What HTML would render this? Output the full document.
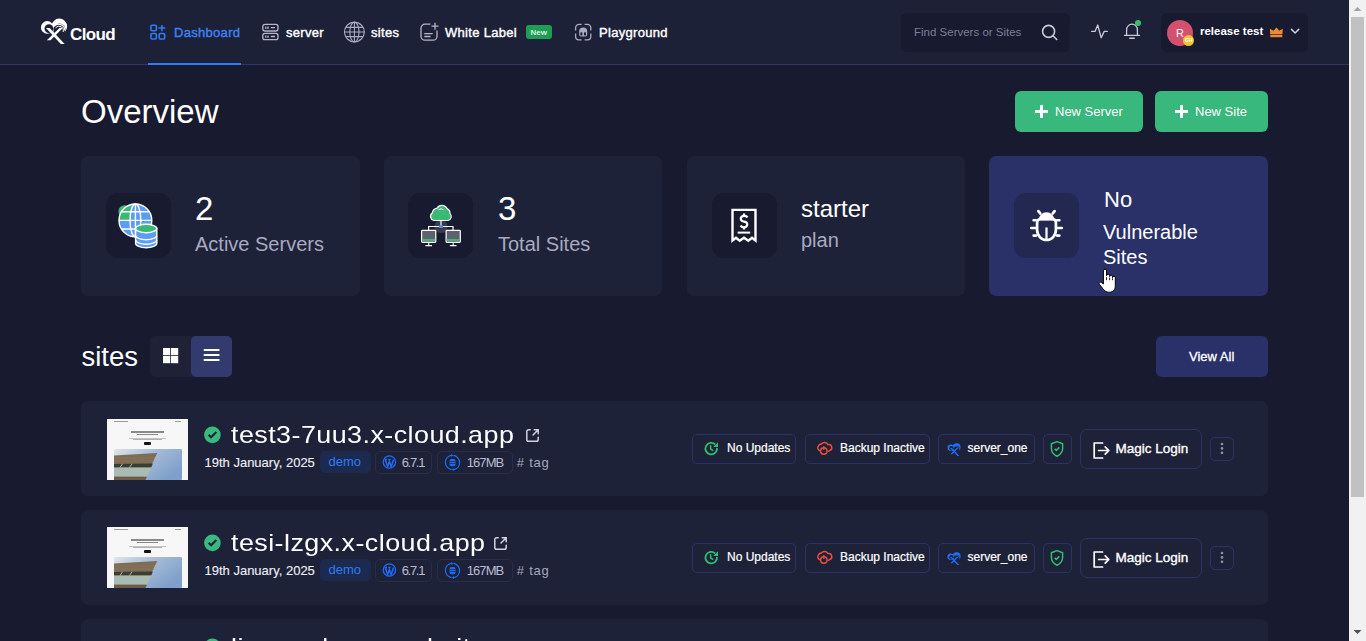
<!DOCTYPE html>
<html><head><meta charset="utf-8">
<style>
*{margin:0;padding:0;box-sizing:border-box}
html,body{width:1366px;height:641px;overflow:hidden;background:#181a2f;font-family:"Liberation Sans",sans-serif;color:#fff}
.a{position:absolute}
.t{position:absolute;white-space:nowrap;line-height:1}
svg{position:absolute;overflow:visible}
#hdr{position:absolute;left:0;top:0;width:1349px;height:65px;background:#1d2137;border-bottom:1px solid #2f3566}
.nav{font-size:13px;font-weight:normal;-webkit-text-stroke:0.4px currentColor;letter-spacing:0.3px;color:#fff}
.card{position:absolute;top:156px;width:279px;height:140px;background:#1e2238;border-radius:7px}
.ibox{position:absolute;left:25px;top:37px;width:65px;height:65px;background:#181a2f;border-radius:12px}
.row{position:absolute;left:81px;width:1187px;height:95px;background:#1e2238;border-radius:7px}
.pill{position:absolute;height:30px;border:1px solid #2d3266;border-radius:5px}
.ptxt{font-size:12px;color:#fff;-webkit-text-stroke:0.2px #fff}
#sb{position:absolute;left:1349px;top:0;width:17px;height:641px;background:#f1f1f1}
</style></head><body>

<div id="hdr"></div>
<!-- logo -->
<svg style="left:38px;top:14px" width="32" height="34" viewBox="0 0 32 34">
<defs><mask id="lm"><rect x="0" y="0" width="32" height="34" fill="#fff"/>
<circle cx="10.9" cy="14.6" r="4.4" fill="#000"/><circle cx="21.4" cy="15.4" r="6" fill="#000"/></mask></defs>
<g mask="url(#lm)" fill="#fff"><circle cx="9.2" cy="13.4" r="6.3"/><circle cx="21.3" cy="12.4" r="7.8"/></g>
<path d="M16.2 12.4 A6 6 0 0 1 26.8 16.4" stroke="#fff" stroke-width="1.2" fill="none"/>
<path d="M17.6 13.8 A4.4 4.4 0 0 1 25.2 18" stroke="#fff" stroke-width="1" fill="none"/>
<path d="M8 13.9 H11.6 L26.6 30 H22.8 Z" fill="#fff"/>
<path d="M21.8 13.7 H25 L12.6 26.3 H8.8 Z" fill="#fff"/>
</svg>
<div class="t" style="left:70px;top:25.5px;font-size:17px;font-weight:bold;letter-spacing:-0.6px">Cloud</div>

<!-- nav -->
<div class="a" style="left:148px;top:63px;width:93px;height:2px;background:#2f7cf6"></div>
<div class="t nav" style="left:174px;top:26px;color:#3b82f6">Dashboard</div>
<div class="t nav" style="left:286px;top:26px">server</div>
<div class="t nav" style="left:371px;top:26px">sites</div>
<div class="t nav" style="left:445px;top:26px">White Label</div>
<div class="a" style="left:526px;top:25px;width:26px;height:14px;background:#1f9d55;border-radius:3px"></div>
<div class="t" style="left:530.5px;top:28.5px;font-size:8px;font-weight:bold;color:#d8f0e0">New</div>
<div class="t nav" style="left:599px;top:26px">Playground</div>

<!-- search -->
<div class="a" style="left:901px;top:13px;width:169px;height:39px;background:#181a2f;border-radius:6px"></div>
<div class="t" style="left:914px;top:26.5px;font-size:11.5px;color:#7b7f99">Find Servers or Sites</div>

<!-- user -->
<div class="a" style="left:1161px;top:13px;width:147px;height:39px;background:#181a2f;border-radius:6px"></div>
<div class="a" style="left:1167px;top:20px;width:26px;height:26px;border-radius:50%;background:#d4506f"></div>
<div class="t" style="left:1176px;top:28px;font-size:11px;color:#fff">R</div>
<div class="a" style="left:1182.7px;top:34.6px;width:11.6px;height:11.6px;border-radius:50%;background:#f0c330"></div>
<div class="t" style="left:1185px;top:38px;font-size:5px;font-weight:bold;color:#fff">GH</div>
<div class="t" style="left:1200px;top:26px;font-size:11.5px;font-weight:bold">release test</div>


<!-- nav icons -->
<svg style="left:146px;top:20px" width="24" height="24" viewBox="0 0 24 24" fill="none" stroke="#2f7cf6" stroke-width="1.6">
<rect x="4.9" y="5.3" width="5.5" height="5.5" rx="1.3"/><rect x="4.9" y="13.5" width="5.5" height="5.5" rx="1.3"/><rect x="13.2" y="13.5" width="5.5" height="5.5" rx="1.3"/>
<path d="M12.4 8.05 H19.4 M15.9 4.9 V11.2"/></svg>
<svg style="left:258px;top:20px" width="24" height="24" viewBox="0 0 24 24" fill="none" stroke="#b4b6c8" stroke-width="1.3">
<rect x="4.8" y="4.4" width="15.2" height="6.6" rx="2.2"/><rect x="4.8" y="13.4" width="15.2" height="6.2" rx="2.2"/>
<path d="M7.8 6.6 V8.9 M10 6.6 V8.9 M12.8 7.7 H17 M7.8 15.4 V17.7 M10 15.4 V17.7 M12.8 16.5 H17"/></svg>
<svg style="left:342px;top:20px" width="26" height="24" viewBox="0 0 26 24" fill="none" stroke="#a9abc3" stroke-width="1.1">
<circle cx="12.4" cy="12" r="9.9"/><ellipse cx="12.4" cy="12" rx="4.6" ry="9.9"/><path d="M12.4 2.1 V21.9 M2.5 12 H22.3 M3.8 7.4 H21 M3.8 16.6 H21"/></svg>
<svg style="left:417px;top:20px" width="24" height="24" viewBox="0 0 24 24" fill="none" stroke="#b4b6c8" stroke-width="1.3">
<path d="M13.4 4.2 H8 A4 4 0 0 0 4 8.2 V16.2 A4 4 0 0 0 8 20.2 H16 A4 4 0 0 0 20 16.2 V10.6"/>
<path d="M14.5 6.2 H21.5 M18 2.7 V9.7 M7.3 13.7 H15.7 M7.3 16.5 H13.5"/></svg>
<svg style="left:571px;top:20px" width="24" height="24" viewBox="0 0 24 24" fill="none" stroke="#a9abc3" stroke-width="1.3">
<path d="M4.6 10.6 V7.8 A3.4 3.4 0 0 1 8 4.4 H10.6 M13.6 4.4 H16.4 A3.4 3.4 0 0 1 19.8 7.8 V10.6 M19.8 13.6 V16.4 A3.4 3.4 0 0 1 16.4 19.8 H13.6 M10.6 19.8 H8 A3.4 3.4 0 0 1 4.6 16.4 V13.6"/>
<path d="M8.2 11 A4 3.6 0 0 1 16.2 11 V14.8 A1.8 1.8 0 0 1 14.4 16.6 H10 A1.8 1.8 0 0 1 8.2 14.8 Z" fill="#a9abc3" stroke="none"/>
<rect x="9.4" y="12.4" width="2" height="3" fill="#1e2137" stroke="none"/><rect x="13" y="12.4" width="2" height="3" fill="#1e2137" stroke="none"/></svg>

<!-- search icon -->
<svg style="left:1040px;top:23px" width="20" height="20" viewBox="0 0 20 20" fill="none" stroke="#c8cad8" stroke-width="1.6">
<circle cx="8.6" cy="8.4" r="6"/><path d="M13 12.8 L17.2 17"/></svg>
<!-- activity -->
<svg style="left:1088px;top:18px" width="24" height="24" viewBox="0 0 24 24" fill="none" stroke="#c8cad8" stroke-width="1.3" stroke-linejoin="round" stroke-linecap="round">
<path d="M3.6 13.4 H7 L9.7 7 L13.2 19.8 L16.2 13.4 H19.3"/></svg>
<!-- bell -->
<svg style="left:1120px;top:18px" width="24" height="24" viewBox="0 0 24 24" fill="none" stroke="#c8cad8" stroke-width="1.3" stroke-linecap="round">
<path d="M6.6 17.3 V11.8 A5.4 5.6 0 0 1 17.4 11.8 V17.3"/><path d="M4.5 17.3 H19.6"/><path d="M9.8 20.2 H14.2" stroke-width="1.5"/></svg>
<div class="a" style="left:1135px;top:19.8px;width:6.2px;height:6.2px;border-radius:50%;background:#3bbf6e"></div>
<!-- crown -->
<svg style="left:1269px;top:27px" width="15" height="11" viewBox="0 0 15 11" fill="#ef8a2e">
<path d="M0.9 1.7 L4.4 3.8 L7.5 0.6 L10.4 3.8 L13.8 1.7 L13.4 7.3 H1.2 Z"/><rect x="1.3" y="7.9" width="12" height="2.3"/></svg>
<!-- chevron -->
<svg style="left:1289px;top:27px" width="12" height="9" viewBox="0 0 12 9" fill="none" stroke="#c8d0f0" stroke-width="1.5" stroke-linecap="round" stroke-linejoin="round">
<path d="M2.5 2.4 L6.1 6 L9.7 2.4"/></svg>

<!-- overview -->
<div class="t" style="left:81px;top:95px;font-size:33px">Overview</div>
<div class="a" style="left:1015px;top:91px;width:128px;height:41px;background:#38b87c;border-radius:6px"></div>
<svg style="left:1034px;top:104px" width="15" height="15" viewBox="0 0 15 15"><path d="M7.5 1 V14 M1 7.5 H14" stroke="#fff" stroke-width="3"/></svg>
<div class="t" style="left:1055px;top:105px;font-size:13px">New Server</div>
<div class="a" style="left:1155px;top:91px;width:113px;height:41px;background:#38b87c;border-radius:6px"></div>
<svg style="left:1174px;top:104px" width="15" height="15" viewBox="0 0 15 15"><path d="M7.5 1 V14 M1 7.5 H14" stroke="#fff" stroke-width="3"/></svg>
<div class="t" style="left:1195px;top:105px;font-size:13px">New Site</div>

<div class="card" style="left:81px"><div class="ibox"><svg style="left:0;top:0" width="65" height="65" viewBox="0 0 65 65">
<defs><clipPath id="gc"><circle cx="29.4" cy="27.4" r="16.4"/></clipPath></defs>
<circle cx="18.6" cy="18.4" r="6.2" fill="#3bb873"/>
<circle cx="29.4" cy="27.4" r="16.4" fill="#5b9cf5"/>
<rect x="10" y="8" width="14.6" height="19.4" fill="#3bb873" clip-path="url(#gc)"/>
<g fill="none" stroke="#fff" stroke-width="1.4"><ellipse cx="29.4" cy="27.4" rx="5.4" ry="16.4"/><path d="M29.4 11 V43.8 M13 27.4 H45.8 M16 18.8 H42.8 M16 36 H42.8"/>
<circle cx="29.4" cy="27.4" r="16.4"/></g>
<path d="M29.6 35.5 V50.5 A10.6 4.2 0 0 0 50.8 50.5 V35.5 Z" fill="#5b9cf5" stroke="#fff" stroke-width="1.4"/>
<ellipse cx="40.2" cy="35.5" rx="10.6" ry="4.2" fill="#3bb873" stroke="#fff" stroke-width="1.4"/>
<path d="M29.6 42.5 A10.6 4.2 0 0 0 50.8 42.5 M29.6 47 A10.6 4.2 0 0 0 50.8 47" fill="none" stroke="#fff" stroke-width="1.4"/>
</svg></div></div>
<div class="card" style="left:384px;width:278px"><div class="ibox" style="left:24px"><svg style="left:0;top:0" width="65" height="65" viewBox="0 0 65 65">
<circle cx="33" cy="33.5" r="6.6" fill="#3a3c4e"/>
<g fill="none" stroke="#fff" stroke-width="1.2"><path d="M33 27 V33.5 M20.6 37 V33.5 H45 V37"/></g>
<rect x="31" y="32.3" width="4" height="2.6" rx="1" fill="#4d8cf5"/>
<path d="M26 27.5 A4.2 4.2 0 0 1 24.2 20 A6.2 6.2 0 0 1 29 15.2 A5.6 5.6 0 0 1 39 15.6 A5 5 0 0 1 42 20.6 A4 4 0 0 1 40 27.5 Z" fill="#3bb873" stroke="#fff" stroke-width="1.2"/>
<path d="M30.5 16.8 A4 4 0 0 1 35.5 16.8" fill="none" stroke="#fff" stroke-width="1"/>
<rect x="13.6" y="37.4" width="14.2" height="12" rx="0.8" fill="#5f6070" stroke="#fff" stroke-width="1.2"/>
<rect x="14.2" y="46" width="13" height="2" fill="#3bb873"/>
<rect x="38.1" y="37.4" width="14.2" height="12" rx="0.8" fill="#5f6070" stroke="#fff" stroke-width="1.2"/>
<rect x="38.7" y="46" width="13" height="2" fill="#3bb873"/>
<path d="M20.7 49.4 V52.6 M17.4 52.6 H24 M45.2 49.4 V52.6 M41.9 52.6 H48.5" stroke="#fff" stroke-width="1.1"/>
</svg></div></div>
<div class="card" style="left:687px;width:278px"><div class="ibox"><svg style="left:-1px;top:0" width="65" height="65" viewBox="0 0 65 65" fill="none" stroke="#fff" stroke-width="2.4">
<path d="M21.5 16.9 H44.5 V47.5 L41 44.8 L37.3 47.8 L33 44.8 L28.7 47.8 L25 44.8 L21.5 47.5 Z"/>
<path d="M36.4 24.6 A3.4 2.8 0 0 0 33 22.8 A3.2 2.9 0 0 0 33 28.6 A3.2 2.9 0 0 1 33 34.4 A3.4 2.8 0 0 1 29.6 32.6 M33 20.4 V22.8 M33 34.4 V36.6" stroke-width="2.3"/>
<path d="M26.6 39.6 H39.2" stroke-width="2"/>
</svg></div></div>
<div class="card" style="left:989px;background:#2a3068"><div class="ibox" style="background:#222850"><svg style="left:0;top:0" width="65" height="65" viewBox="0 0 65 65">
<path d="M24.4 27.6 A8.1 8.4 0 0 1 40.6 27.6 Z" fill="#fff"/>
<path d="M26.2 20.4 L24.4 18.2 M38.8 20.4 L40.6 18.2" stroke="#fff" stroke-width="2.8" stroke-linecap="round"/>
<path d="M23.1 30 C23.1 27.5 24.6 26 27 26 H38 C40.4 26 41.9 27.5 41.9 30 V37 A9.4 10 0 0 1 23.1 37 Z" fill="none" stroke="#fff" stroke-width="2.7"/>
<path d="M32.5 34.5 V46" stroke="#fff" stroke-width="2.2"/>
<path d="M19.6 27.2 H22 M17.2 35 H22 M19.6 42.6 H22 M43 27.2 H45.4 M43 35 H47.8 M43 42.6 H45.4" stroke="#fff" stroke-width="2.6" stroke-linecap="round"/>
</svg></div></div>

<div class="t" style="left:195px;top:192px;font-size:33px">2</div>
<div class="t" style="left:195px;top:234px;font-size:20px;color:#a7aac0">Active Servers</div>
<div class="t" style="left:498px;top:192px;font-size:33px">3</div>
<div class="t" style="left:498px;top:234px;font-size:20px;color:#a7aac0">Total Sites</div>
<div class="t" style="left:801px;top:197px;font-size:24px">starter</div>
<div class="t" style="left:801px;top:230px;font-size:20px;color:#a7aac0">plan</div>
<div class="t" style="left:1104px;top:189px;font-size:22px">No</div>
<div class="t" style="left:1103px;top:222px;font-size:20px">Vulnerable</div>
<div class="t" style="left:1103px;top:247px;font-size:20px">Sites</div>

<svg style="left:1090px;top:260px" width="40" height="40" viewBox="0 0 40 40">
<path d="M13.4 10.8 A1.55 1.55 0 0 1 16.5 10.8 V15.8 A1.6 1.6 0 0 1 19.7 15.9 V16.6 A1.4 1.4 0 0 1 22.5 16.8 V17.6 A1.4 1.4 0 0 1 25.3 17.7 V26 C25.3 29.8 23 32.2 19.5 32.2 H18.5 C16.5 32.2 15.2 31.4 14 30 L9.4 24.4 C8.4 23.2 9.8 21.4 11.2 22.3 L13.4 24 Z" fill="#fff" stroke="#000" stroke-width="1"/>
<path d="M16.5 17.2 V20.2 M19.6 17.6 V20.2 M22.5 18.4 V20.2" stroke="#000" stroke-width="0.9"/></svg>
<!-- sites header -->
<div class="t" style="left:81.5px;top:343px;font-size:27.5px">sites</div>
<div class="a" style="left:150px;top:336px;width:82px;height:41px;background:#1f2237;border-radius:5px"></div>
<div class="a" style="left:191px;top:336px;width:41px;height:41px;background:#323a6e;border-radius:5px"></div>
<svg style="left:162px;top:347px" width="18" height="17" viewBox="0 0 18 17" fill="#fff">
<rect x="1" y="1" width="7.2" height="7.2"/><rect x="9" y="1" width="7.2" height="7.2"/><rect x="1" y="9" width="7.2" height="7.2"/><rect x="9" y="9" width="7.2" height="7.2"/></svg>
<svg style="left:203px;top:348px" width="18" height="15" viewBox="0 0 18 15" stroke="#fff" stroke-width="2.2" stroke-linecap="round">
<path d="M1.6 2 H15.6 M1.6 7 H15.6 M1.6 12 H15.6"/></svg>
<div class="a" style="left:1156px;top:336px;width:112px;height:41px;background:#2a3068;border-radius:6px"></div>
<div class="t" style="left:1189px;top:350px;font-size:13px;-webkit-text-stroke:0.3px #fff">View All</div>

<!--ROWS-->
<div class="row" style="top:401px"></div>
<div class="a" style="left:107px;top:419px;width:81px;height:61px;background:#f7f7f7;overflow:hidden">
<div class="a" style="left:7px;top:2px;width:14px;height:1px;background:#9a9a9a"></div>
<div class="a" style="left:68px;top:2px;width:6px;height:1px;background:#9a9a9a"></div>
<div class="a" style="left:24px;top:12px;width:33px;height:1.5px;background:#8a8a8a"></div>
<div class="a" style="left:30px;top:14.8px;width:21px;height:1.5px;background:#8a8a8a"></div>
<div class="a" style="left:22px;top:19px;width:37px;height:1px;background:#c4c4c4"></div>
<div class="a" style="left:26px;top:20px;width:29px;height:1px;background:#b0b0b0"></div>
<div class="a" style="left:37px;top:23px;width:7px;height:3px;background:#111;border-radius:1px"></div>
<svg style="left:6.5px;top:30px" width="68" height="31" viewBox="0 0 68 31">
<defs><linearGradient id="sky419" x1="0" y1="0" x2="1" y2="0.6"><stop offset="0" stop-color="#e2e5ea"/><stop offset="0.45" stop-color="#a9bdd8"/><stop offset="1" stop-color="#7fa0ca"/></linearGradient></defs>
<rect x="0" y="0" width="68" height="31" rx="1" fill="url(#sky419)"/>
<path d="M0 6.4 L43.3 4.1 L30 31 L0 31 Z" fill="#7f6c55"/>
<path d="M0 15 L38.9 14.6 L37.2 18.5 L0 18.5 Z" fill="#3a3d33"/>
<path d="M0 18.5 L37.2 18.5 L33 27.7 L0 27.7 Z" fill="#a9bcb4"/>
<path d="M0 27.7 L33 27.7 L31.5 31 L0 31 Z" fill="#6f5c48"/>
<path d="M6 18.5 L8.5 14.8 M15.5 18.5 L18 14.8" stroke="#c9d2c6" stroke-width="0.8"/>
<path d="M0 9 H41 M0 12 H40" stroke="#8d7a62" stroke-width="0.7"/>
</svg></div>
<svg style="left:203px;top:426px" width="19" height="19" viewBox="0 0 19 19"><circle cx="9.4" cy="8.9" r="8.3" fill="#38b97e"/><path d="M5.5 8.8 L8.1 11.2 L13.4 6.1" fill="none" stroke="#1f2237" stroke-width="2.1"/></svg>
<div class="t" style="left:231px;top:423.2px;font-size:24px;letter-spacing:0.4px;transform:scaleX(1.12);transform-origin:0 0">test3-7uu3.x-cloud.app</div>
<svg style="left:524.7px;top:428px" width="15" height="15" viewBox="0 0 15 15" fill="none" stroke="#d0d2e0" stroke-width="1.5" stroke-linecap="round"><path d="M5.2 1.8 H3.6 A1.8 1.8 0 0 0 1.8 3.6 V11.4 A1.8 1.8 0 0 0 3.6 13.2 H11.4 A1.8 1.8 0 0 0 13.2 11.4 V9.2"/><path d="M8 7 L13.2 1.8 M9.2 1.8 H13.2 V5.8"/></svg>
<div class="t" style="left:204.5px;top:456.1px;font-size:13px;color:#eceef5;-webkit-text-stroke:0.12px #eceef5">19th January, 2025</div>
<div class="a" style="left:320px;top:451px;width:51px;height:22px;background:#1b2a4e;border-radius:5px"></div>
<div class="t" style="left:328.5px;top:455.2px;font-size:13px;color:#2f7cf6">demo</div>
<div class="a" style="left:375px;top:450.5px;width:57px;height:23px;border:1px solid #2a2d46;border-radius:5px"></div>
<svg style="left:382px;top:455px" width="15" height="15" viewBox="0 0 15 15"><circle cx="7.4" cy="7" r="6.2" fill="none" stroke="#1a6dff" stroke-width="1.3"/><path d="M3.2 4.4 L5.6 11.4 L7.4 6.4 L9.2 11.4 L11.6 4.4 M2.6 4.4 H5 M6.4 4.4 H8.6" fill="none" stroke="#1a6dff" stroke-width="1.5"/></svg>
<div class="t" style="left:401.7px;top:455.6px;font-size:13px;color:#b8bbd0;letter-spacing:-1.3px">6.7.1</div>
<div class="a" style="left:436.5px;top:450.5px;width:76px;height:23px;border:1px solid #2a2d46;border-radius:5px"></div>
<svg style="left:444px;top:453.5px" width="17" height="17" viewBox="0 0 17 17" fill="none" stroke="#1a6dff" stroke-width="1.2"><path d="M7.2 1.3 A7.2 7.2 0 0 0 1.4 8.5 A7.2 7.2 0 0 0 7.6 15.6 M9.8 15.7 A7.2 7.2 0 0 0 15.6 8.5 A7.2 7.2 0 0 0 9.4 1.4"/><path d="M7 0 L9.4 1.4 L7 2.8 Z M10 14.2 L7.6 15.6 L10 17 Z" fill="#1a6dff" stroke="none"/><rect x="5.5" y="5" width="6" height="7.2" rx="2" fill="#1a6dff" stroke="none"/><path d="M5.5 7.6 H11.5 M5.5 9.6 H11.5" stroke="#1f2237" stroke-width="0.7"/></svg>
<div class="t" style="left:466.7px;top:455.6px;font-size:13px;color:#b8bbd0;letter-spacing:-0.9px">167MB</div>
<div class="t" style="left:516.7px;top:455.6px;font-size:13px;color:#a4a7bd;letter-spacing:0.8px"># tag</div>
<div class="pill" style="left:692px;top:434px;width:104px"></div>
<svg style="left:702px;top:440px" width="18" height="18" viewBox="0 0 18 18" fill="none" stroke="#2fbf71" stroke-width="1.8"><path d="M15 8 A5.8 5.8 0 1 1 13.2 4.4"/><path d="M16 2.2 V7 H11.2 Z" fill="#2fbf71" stroke="none"/><path d="M8.6 5.3 V9 L11.2 10.6" stroke-width="1.5"/></svg>
<div class="t ptxt" style="left:727px;top:442.0px">No Updates</div>
<div class="pill" style="left:805px;top:434px;width:125px"></div>
<svg style="left:815px;top:440px" width="18" height="18" viewBox="0 0 18 18" fill="none" stroke="#ef4f3f" stroke-width="1.4" stroke-linecap="round"><path d="M5 10.8 A3 3 0 0 1 3.4 6 A3.2 3.2 0 0 1 6.4 4 A4 4 0 0 1 13 4.6 A3 3 0 0 1 14.4 10.6 A2 2 0 0 1 13.4 11.4"/><circle cx="8.8" cy="11" r="3.2"/><path d="M8.8 6.6 V9.2"/></svg>
<div class="t ptxt" style="left:840px;top:442.0px">Backup Inactive</div>
<div class="pill" style="left:938px;top:434px;width:97px"></div>
<svg style="left:945px;top:441px" width="18" height="17" viewBox="0 0 32 34" ><defs><mask id="sm401"><rect x="0" y="0" width="32" height="34" fill="#fff"/><circle cx="10.9" cy="14.6" r="4.4" fill="#000"/><circle cx="21.4" cy="15.4" r="6" fill="#000"/></mask></defs><g mask="url(#sm401)" fill="#1a73ff"><circle cx="9.2" cy="13.4" r="6.3"/><circle cx="21.3" cy="12.4" r="7.8"/></g><path d="M16.2 12.4 A6 6 0 0 1 26.8 16.4" stroke="#1a73ff" stroke-width="1.4" fill="none"/><path d="M8 13.9 H11.6 L26.6 30 H22.8 Z" fill="#1a73ff"/><path d="M21.8 13.7 H25 L12.6 26.3 H8.8 Z" fill="#1a73ff"/></svg>
<div class="t ptxt" style="left:967.5px;top:442.0px">server_one</div>
<div class="pill" style="left:1043px;top:434px;width:29px"></div>
<svg style="left:1048px;top:440px" width="18" height="18" viewBox="0 0 18 18" fill="none" stroke="#2fbf71" stroke-width="1.5" stroke-linejoin="round"><path d="M9 1.6 L14.6 3.8 V8.6 C14.6 12.2 12.2 14.8 9 16.2 C5.8 14.8 3.4 12.2 3.4 8.6 V3.8 Z"/><path d="M6.7 8.9 L8.3 10.4 L11.3 7.4" stroke-width="1.5"/></svg>
<div class="a" style="left:1080px;top:429px;width:122px;height:40px;border:1px solid #2d3266;border-radius:7px"></div>
<svg style="left:1090px;top:440px" width="22" height="20" viewBox="0 0 22 20" fill="none" stroke="#fff" stroke-width="1.7" stroke-linecap="round" stroke-linejoin="round"><path d="M12.6 3 H4.2 V18 H12.6"/><path d="M8.6 10.5 H18.8 M15.2 6.8 L18.8 10.5 L15.2 14.2"/></svg>
<div class="t" style="left:1115.5px;top:442.1px;font-size:13.5px;-webkit-text-stroke:0.35px #fff">Magic Login</div>
<div class="a" style="left:1210px;top:437px;width:24px;height:24px;border:1px solid #2d3266;border-radius:5px"></div>
<svg style="left:1210px;top:437px" width="24" height="24" viewBox="0 0 24 24" fill="#8d90a8"><circle cx="12" cy="7" r="1.35"/><circle cx="12" cy="11.4" r="1.35"/><circle cx="12" cy="15.8" r="1.35"/></svg>
<div class="row" style="top:510px"></div>
<div class="a" style="left:107px;top:527px;width:81px;height:61px;background:#f7f7f7;overflow:hidden">
<div class="a" style="left:7px;top:2px;width:14px;height:1px;background:#9a9a9a"></div>
<div class="a" style="left:68px;top:2px;width:6px;height:1px;background:#9a9a9a"></div>
<div class="a" style="left:24px;top:12px;width:33px;height:1.5px;background:#8a8a8a"></div>
<div class="a" style="left:30px;top:14.8px;width:21px;height:1.5px;background:#8a8a8a"></div>
<div class="a" style="left:22px;top:19px;width:37px;height:1px;background:#c4c4c4"></div>
<div class="a" style="left:26px;top:20px;width:29px;height:1px;background:#b0b0b0"></div>
<div class="a" style="left:37px;top:23px;width:7px;height:3px;background:#111;border-radius:1px"></div>
<svg style="left:6.5px;top:30px" width="68" height="31" viewBox="0 0 68 31">
<defs><linearGradient id="sky527" x1="0" y1="0" x2="1" y2="0.6"><stop offset="0" stop-color="#e2e5ea"/><stop offset="0.45" stop-color="#a9bdd8"/><stop offset="1" stop-color="#7fa0ca"/></linearGradient></defs>
<rect x="0" y="0" width="68" height="31" rx="1" fill="url(#sky527)"/>
<path d="M0 6.4 L43.3 4.1 L30 31 L0 31 Z" fill="#7f6c55"/>
<path d="M0 15 L38.9 14.6 L37.2 18.5 L0 18.5 Z" fill="#3a3d33"/>
<path d="M0 18.5 L37.2 18.5 L33 27.7 L0 27.7 Z" fill="#a9bcb4"/>
<path d="M0 27.7 L33 27.7 L31.5 31 L0 31 Z" fill="#6f5c48"/>
<path d="M6 18.5 L8.5 14.8 M15.5 18.5 L18 14.8" stroke="#c9d2c6" stroke-width="0.8"/>
<path d="M0 9 H41 M0 12 H40" stroke="#8d7a62" stroke-width="0.7"/>
</svg></div>
<svg style="left:203px;top:534px" width="19" height="19" viewBox="0 0 19 19"><circle cx="9.4" cy="8.9" r="8.3" fill="#38b97e"/><path d="M5.5 8.8 L8.1 11.2 L13.4 6.1" fill="none" stroke="#1f2237" stroke-width="2.1"/></svg>
<div class="t" style="left:231px;top:531.2px;font-size:24px;letter-spacing:0.4px;transform:scaleX(1.12);transform-origin:0 0">tesi-lzgx.x-cloud.app</div>
<svg style="left:492.7px;top:536px" width="15" height="15" viewBox="0 0 15 15" fill="none" stroke="#d0d2e0" stroke-width="1.5" stroke-linecap="round"><path d="M5.2 1.8 H3.6 A1.8 1.8 0 0 0 1.8 3.6 V11.4 A1.8 1.8 0 0 0 3.6 13.2 H11.4 A1.8 1.8 0 0 0 13.2 11.4 V9.2"/><path d="M8 7 L13.2 1.8 M9.2 1.8 H13.2 V5.8"/></svg>
<div class="t" style="left:204.5px;top:564.1px;font-size:13px;color:#eceef5;-webkit-text-stroke:0.12px #eceef5">19th January, 2025</div>
<div class="a" style="left:320px;top:559px;width:51px;height:22px;background:#1b2a4e;border-radius:5px"></div>
<div class="t" style="left:328.5px;top:563.2px;font-size:13px;color:#2f7cf6">demo</div>
<div class="a" style="left:375px;top:558.5px;width:57px;height:23px;border:1px solid #2a2d46;border-radius:5px"></div>
<svg style="left:382px;top:563px" width="15" height="15" viewBox="0 0 15 15"><circle cx="7.4" cy="7" r="6.2" fill="none" stroke="#1a6dff" stroke-width="1.3"/><path d="M3.2 4.4 L5.6 11.4 L7.4 6.4 L9.2 11.4 L11.6 4.4 M2.6 4.4 H5 M6.4 4.4 H8.6" fill="none" stroke="#1a6dff" stroke-width="1.5"/></svg>
<div class="t" style="left:401.7px;top:563.6px;font-size:13px;color:#b8bbd0;letter-spacing:-1.3px">6.7.1</div>
<div class="a" style="left:436.5px;top:558.5px;width:76px;height:23px;border:1px solid #2a2d46;border-radius:5px"></div>
<svg style="left:444px;top:561.5px" width="17" height="17" viewBox="0 0 17 17" fill="none" stroke="#1a6dff" stroke-width="1.2"><path d="M7.2 1.3 A7.2 7.2 0 0 0 1.4 8.5 A7.2 7.2 0 0 0 7.6 15.6 M9.8 15.7 A7.2 7.2 0 0 0 15.6 8.5 A7.2 7.2 0 0 0 9.4 1.4"/><path d="M7 0 L9.4 1.4 L7 2.8 Z M10 14.2 L7.6 15.6 L10 17 Z" fill="#1a6dff" stroke="none"/><rect x="5.5" y="5" width="6" height="7.2" rx="2" fill="#1a6dff" stroke="none"/><path d="M5.5 7.6 H11.5 M5.5 9.6 H11.5" stroke="#1f2237" stroke-width="0.7"/></svg>
<div class="t" style="left:466.7px;top:563.6px;font-size:13px;color:#b8bbd0;letter-spacing:-0.9px">167MB</div>
<div class="t" style="left:516.7px;top:563.6px;font-size:13px;color:#a4a7bd;letter-spacing:0.8px"># tag</div>
<div class="pill" style="left:692px;top:543px;width:104px"></div>
<svg style="left:702px;top:549px" width="18" height="18" viewBox="0 0 18 18" fill="none" stroke="#2fbf71" stroke-width="1.8"><path d="M15 8 A5.8 5.8 0 1 1 13.2 4.4"/><path d="M16 2.2 V7 H11.2 Z" fill="#2fbf71" stroke="none"/><path d="M8.6 5.3 V9 L11.2 10.6" stroke-width="1.5"/></svg>
<div class="t ptxt" style="left:727px;top:551.0px">No Updates</div>
<div class="pill" style="left:805px;top:543px;width:125px"></div>
<svg style="left:815px;top:549px" width="18" height="18" viewBox="0 0 18 18" fill="none" stroke="#ef4f3f" stroke-width="1.4" stroke-linecap="round"><path d="M5 10.8 A3 3 0 0 1 3.4 6 A3.2 3.2 0 0 1 6.4 4 A4 4 0 0 1 13 4.6 A3 3 0 0 1 14.4 10.6 A2 2 0 0 1 13.4 11.4"/><circle cx="8.8" cy="11" r="3.2"/><path d="M8.8 6.6 V9.2"/></svg>
<div class="t ptxt" style="left:840px;top:551.0px">Backup Inactive</div>
<div class="pill" style="left:938px;top:543px;width:97px"></div>
<svg style="left:945px;top:550px" width="18" height="17" viewBox="0 0 32 34" ><defs><mask id="sm510"><rect x="0" y="0" width="32" height="34" fill="#fff"/><circle cx="10.9" cy="14.6" r="4.4" fill="#000"/><circle cx="21.4" cy="15.4" r="6" fill="#000"/></mask></defs><g mask="url(#sm510)" fill="#1a73ff"><circle cx="9.2" cy="13.4" r="6.3"/><circle cx="21.3" cy="12.4" r="7.8"/></g><path d="M16.2 12.4 A6 6 0 0 1 26.8 16.4" stroke="#1a73ff" stroke-width="1.4" fill="none"/><path d="M8 13.9 H11.6 L26.6 30 H22.8 Z" fill="#1a73ff"/><path d="M21.8 13.7 H25 L12.6 26.3 H8.8 Z" fill="#1a73ff"/></svg>
<div class="t ptxt" style="left:967.5px;top:551.0px">server_one</div>
<div class="pill" style="left:1043px;top:543px;width:29px"></div>
<svg style="left:1048px;top:549px" width="18" height="18" viewBox="0 0 18 18" fill="none" stroke="#2fbf71" stroke-width="1.5" stroke-linejoin="round"><path d="M9 1.6 L14.6 3.8 V8.6 C14.6 12.2 12.2 14.8 9 16.2 C5.8 14.8 3.4 12.2 3.4 8.6 V3.8 Z"/><path d="M6.7 8.9 L8.3 10.4 L11.3 7.4" stroke-width="1.5"/></svg>
<div class="a" style="left:1080px;top:538px;width:122px;height:40px;border:1px solid #2d3266;border-radius:7px"></div>
<svg style="left:1090px;top:549px" width="22" height="20" viewBox="0 0 22 20" fill="none" stroke="#fff" stroke-width="1.7" stroke-linecap="round" stroke-linejoin="round"><path d="M12.6 3 H4.2 V18 H12.6"/><path d="M8.6 10.5 H18.8 M15.2 6.8 L18.8 10.5 L15.2 14.2"/></svg>
<div class="t" style="left:1115.5px;top:551.1px;font-size:13.5px;-webkit-text-stroke:0.35px #fff">Magic Login</div>
<div class="a" style="left:1210px;top:546px;width:24px;height:24px;border:1px solid #2d3266;border-radius:5px"></div>
<svg style="left:1210px;top:546px" width="24" height="24" viewBox="0 0 24 24" fill="#8d90a8"><circle cx="12" cy="7" r="1.35"/><circle cx="12" cy="11.4" r="1.35"/><circle cx="12" cy="15.8" r="1.35"/></svg>
<div class="row" style="top:619px"></div>
<svg style="left:203px;top:638px" width="19" height="19" viewBox="0 0 19 19"><circle cx="9.4" cy="8.9" r="8.3" fill="#38b97e"/><path d="M5.5 8.8 L8.1 11.2 L13.4 6.1" fill="none" stroke="#1f2237" stroke-width="2.1"/></svg>
<div class="t" style="left:231px;top:635.2px;font-size:24px;letter-spacing:0.4px;transform:scaleX(1.12);transform-origin:0 0">linuxe-demo-website</div>
<svg style="left:499px;top:640px" width="15" height="15" viewBox="0 0 15 15" fill="none" stroke="#d0d2e0" stroke-width="1.5" stroke-linecap="round"><path d="M5.2 1.8 H3.6 A1.8 1.8 0 0 0 1.8 3.6 V11.4 A1.8 1.8 0 0 0 3.6 13.2 H11.4 A1.8 1.8 0 0 0 13.2 11.4 V9.2"/><path d="M8 7 L13.2 1.8 M9.2 1.8 H13.2 V5.8"/></svg>
<div class="t" style="left:204.5px;top:668.1px;font-size:13px;color:#eceef5;-webkit-text-stroke:0.12px #eceef5">19th January, 2025</div>
<div class="a" style="left:320px;top:663px;width:51px;height:22px;background:#1b2a4e;border-radius:5px"></div>
<div class="t" style="left:328.5px;top:667.2px;font-size:13px;color:#2f7cf6">demo</div>
<div class="a" style="left:375px;top:662.5px;width:57px;height:23px;border:1px solid #2a2d46;border-radius:5px"></div>
<svg style="left:382px;top:667px" width="15" height="15" viewBox="0 0 15 15"><circle cx="7.4" cy="7" r="6.2" fill="none" stroke="#1a6dff" stroke-width="1.3"/><path d="M3.2 4.4 L5.6 11.4 L7.4 6.4 L9.2 11.4 L11.6 4.4 M2.6 4.4 H5 M6.4 4.4 H8.6" fill="none" stroke="#1a6dff" stroke-width="1.5"/></svg>
<div class="t" style="left:401.7px;top:667.6px;font-size:13px;color:#b8bbd0;letter-spacing:-1.3px">6.7.1</div>
<div class="a" style="left:436.5px;top:662.5px;width:76px;height:23px;border:1px solid #2a2d46;border-radius:5px"></div>
<svg style="left:444px;top:665.5px" width="17" height="17" viewBox="0 0 17 17" fill="none" stroke="#1a6dff" stroke-width="1.2"><path d="M7.2 1.3 A7.2 7.2 0 0 0 1.4 8.5 A7.2 7.2 0 0 0 7.6 15.6 M9.8 15.7 A7.2 7.2 0 0 0 15.6 8.5 A7.2 7.2 0 0 0 9.4 1.4"/><path d="M7 0 L9.4 1.4 L7 2.8 Z M10 14.2 L7.6 15.6 L10 17 Z" fill="#1a6dff" stroke="none"/><rect x="5.5" y="5" width="6" height="7.2" rx="2" fill="#1a6dff" stroke="none"/><path d="M5.5 7.6 H11.5 M5.5 9.6 H11.5" stroke="#1f2237" stroke-width="0.7"/></svg>
<div class="t" style="left:466.7px;top:667.6px;font-size:13px;color:#b8bbd0;letter-spacing:-0.9px">167MB</div>
<div class="t" style="left:516.7px;top:667.6px;font-size:13px;color:#a4a7bd;letter-spacing:0.8px"># tag</div>
<div class="pill" style="left:692px;top:646px;width:104px"></div>
<svg style="left:702px;top:652px" width="18" height="18" viewBox="0 0 18 18" fill="none" stroke="#2fbf71" stroke-width="1.8"><path d="M15 8 A5.8 5.8 0 1 1 13.2 4.4"/><path d="M16 2.2 V7 H11.2 Z" fill="#2fbf71" stroke="none"/><path d="M8.6 5.3 V9 L11.2 10.6" stroke-width="1.5"/></svg>
<div class="t ptxt" style="left:727px;top:654.0px">No Updates</div>
<div class="pill" style="left:805px;top:646px;width:125px"></div>
<svg style="left:815px;top:652px" width="18" height="18" viewBox="0 0 18 18" fill="none" stroke="#ef4f3f" stroke-width="1.4" stroke-linecap="round"><path d="M5 10.8 A3 3 0 0 1 3.4 6 A3.2 3.2 0 0 1 6.4 4 A4 4 0 0 1 13 4.6 A3 3 0 0 1 14.4 10.6 A2 2 0 0 1 13.4 11.4"/><circle cx="8.8" cy="11" r="3.2"/><path d="M8.8 6.6 V9.2"/></svg>
<div class="t ptxt" style="left:840px;top:654.0px">Backup Inactive</div>
<div class="pill" style="left:938px;top:646px;width:97px"></div>
<svg style="left:945px;top:653px" width="18" height="17" viewBox="0 0 32 34" ><defs><mask id="sm619"><rect x="0" y="0" width="32" height="34" fill="#fff"/><circle cx="10.9" cy="14.6" r="4.4" fill="#000"/><circle cx="21.4" cy="15.4" r="6" fill="#000"/></mask></defs><g mask="url(#sm619)" fill="#1a73ff"><circle cx="9.2" cy="13.4" r="6.3"/><circle cx="21.3" cy="12.4" r="7.8"/></g><path d="M16.2 12.4 A6 6 0 0 1 26.8 16.4" stroke="#1a73ff" stroke-width="1.4" fill="none"/><path d="M8 13.9 H11.6 L26.6 30 H22.8 Z" fill="#1a73ff"/><path d="M21.8 13.7 H25 L12.6 26.3 H8.8 Z" fill="#1a73ff"/></svg>
<div class="t ptxt" style="left:967.5px;top:654.0px">server_one</div>
<div class="pill" style="left:1043px;top:646px;width:29px"></div>
<svg style="left:1048px;top:652px" width="18" height="18" viewBox="0 0 18 18" fill="none" stroke="#2fbf71" stroke-width="1.5" stroke-linejoin="round"><path d="M9 1.6 L14.6 3.8 V8.6 C14.6 12.2 12.2 14.8 9 16.2 C5.8 14.8 3.4 12.2 3.4 8.6 V3.8 Z"/><path d="M6.7 8.9 L8.3 10.4 L11.3 7.4" stroke-width="1.5"/></svg>
<div class="a" style="left:1080px;top:641px;width:122px;height:40px;border:1px solid #2d3266;border-radius:7px"></div>
<svg style="left:1090px;top:652px" width="22" height="20" viewBox="0 0 22 20" fill="none" stroke="#fff" stroke-width="1.7" stroke-linecap="round" stroke-linejoin="round"><path d="M12.6 3 H4.2 V18 H12.6"/><path d="M8.6 10.5 H18.8 M15.2 6.8 L18.8 10.5 L15.2 14.2"/></svg>
<div class="t" style="left:1115.5px;top:654.1px;font-size:13.5px;-webkit-text-stroke:0.35px #fff">Magic Login</div>
<div class="a" style="left:1210px;top:649px;width:24px;height:24px;border:1px solid #2d3266;border-radius:5px"></div>
<svg style="left:1210px;top:649px" width="24" height="24" viewBox="0 0 24 24" fill="#8d90a8"><circle cx="12" cy="7" r="1.35"/><circle cx="12" cy="11.4" r="1.35"/><circle cx="12" cy="15.8" r="1.35"/></svg>
<!--/ROWS-->

<div id="sb"></div>
<div class="a" style="left:1351px;top:17px;width:13px;height:480px;background:#c1c1c1"></div>
<svg style="left:1349px;top:0" width="17" height="17" viewBox="0 0 17 17"><path d="M4.5 11 L8.5 7 L12.5 11 Z" fill="#a3a3a3"/></svg>
<svg style="left:1349px;top:624px" width="17" height="17" viewBox="0 0 17 17"><path d="M4.5 6 L8.5 10 L12.5 6 Z" fill="#505050"/></svg>
</body></html>
